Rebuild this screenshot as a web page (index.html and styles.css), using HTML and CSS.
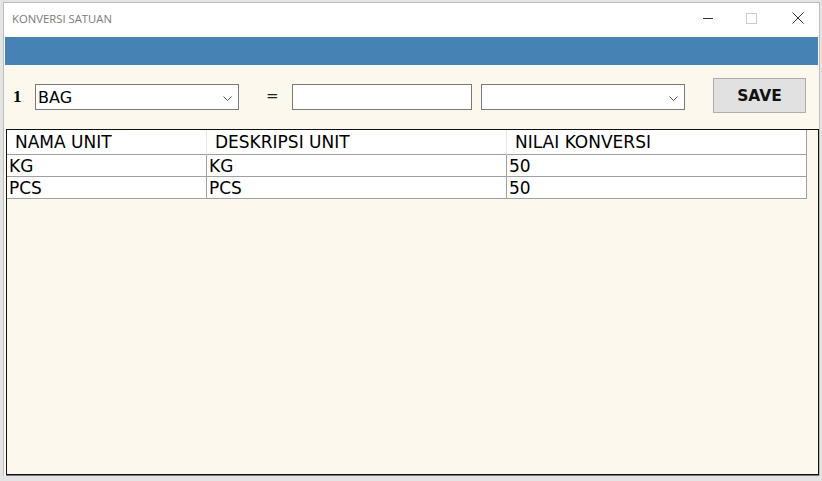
FILE: index.html
```html
<!DOCTYPE html>
<html>
<head>
<meta charset="utf-8">
<link rel="stylesheet" href="styles.css">
</head>
<body>
<div class="window">
  <div class="titlebar">
    <span class="title">KONVERSI SATUAN</span>
    <div class="controls">
      <svg class="ctl" width="46" height="34" viewBox="0 0 46 34"><line x1="22" y1="15.5" x2="32" y2="15.5" stroke="#333" stroke-width="1"/></svg>
      <svg class="ctl" width="46" height="34" viewBox="0 0 46 34"><rect x="19.5" y="10.5" width="10" height="10" fill="none" stroke="#cccccc" stroke-width="1"/></svg>
      <svg class="ctl" width="46" height="34" viewBox="0 0 46 34"><path d="M19.5 9.5 L30.5 20.5 M30.5 9.5 L19.5 20.5" stroke="#333" stroke-width="1" fill="none"/></svg>
    </div>
  </div>
  <div class="bluebar"></div>
  <div class="client">
    <div class="toolbar">
      <span class="num">1</span>
      <div class="combo combo-a"><span class="combo-text">BAG</span><svg class="chev" width="9" height="5" viewBox="0 0 9 5"><path d="M0.5 0.5 L4.5 4.5 L8.5 0.5" stroke="#555" fill="none" stroke-width="1"/></svg></div>
      <span class="eq">=</span>
      <div class="textbox"></div>
      <div class="combo combo-b"><span class="combo-text"></span><svg class="chev" width="9" height="5" viewBox="0 0 9 5"><path d="M0.5 0.5 L4.5 4.5 L8.5 0.5" stroke="#555" fill="none" stroke-width="1"/></svg></div>
      <div class="btn">SAVE</div>
    </div>
    <div class="grid">
      <div class="row head">
        <div class="cell c1">NAMA UNIT</div>
        <div class="cell c2">DESKRIPSI UNIT</div>
        <div class="cell c3">NILAI KONVERSI</div>
      </div>
      <div class="row">
        <div class="cell c1">KG</div>
        <div class="cell c2">KG</div>
        <div class="cell c3">50</div>
      </div>
      <div class="row">
        <div class="cell c1">PCS</div>
        <div class="cell c2">PCS</div>
        <div class="cell c3">50</div>
      </div>
    </div>
  </div>
</div>
</body>
</html>
```
FILE: styles.css
```css
html, body {
  margin: 0;
  padding: 0;
}
body {
  width: 822px;
  height: 481px;
  background: #e4e4e4;
  overflow: hidden;
}
.window {
  margin: 2px 0 0 3px;
  width: 815px;
  height: 473px;
  border: 1px solid #bdbdbd;
  border-bottom: none;
  background: #fdf8ee;
  display: flex;
  flex-direction: column;
}
.titlebar {
  height: 34px;
  background: #ffffff;
  display: flex;
  align-items: center;
  justify-content: space-between;
}
.title {
  font-family: "Open Sans", sans-serif;
  font-size: 11.3px;
  color: #7a7a7a;
  padding-left: 8px;
  padding-bottom: 3px;
}
.controls {
  display: flex;
}
.ctl {
  display: block;
}
.bluebar {
  height: 28px;
  background: #4682b4;
  margin: 0 1px 0 1px;
}
.client {
  flex: 1;
  display: flex;
  flex-direction: column;
}
.toolbar {
  height: 64px;
  display: flex;
  align-items: flex-start;
  padding-left: 9px;
}
.num {
  font-family: "Liberation Serif", serif;
  font-weight: bold;
  font-size: 17px;
  margin-top: 22px;
  width: 22px;
}
.combo {
  margin-top: 19px;
  height: 24px;
  border: 1px solid #7a7a7a;
  background: #fff;
  display: flex;
  align-items: center;
  justify-content: space-between;
  box-sizing: content-box;
}
.combo-a { width: 202px; }
.combo-b { width: 202px; margin-left: 9px; }
.combo-text {
  font-family: "DejaVu Sans", sans-serif;
  font-size: 16px;
  color: #000;
  padding-left: 2px;
}
.chev {
  margin-right: 6px;
  margin-top: 2px;
}
.eq {
  font-family: "DejaVu Sans", sans-serif;
  font-size: 15px;
  color: #222;
  margin-top: 22px;
  margin-left: 27px;
  width: 26px;
}
.textbox {
  margin-top: 19px;
  width: 178px;
  height: 24px;
  border: 1px solid #7a7a7a;
  background: #fff;
}
.btn {
  margin-top: 13px;
  margin-left: 28px;
  width: 91px;
  height: 33px;
  border: 1px solid #adadad;
  background: #e1e1e1;
  font-family: "DejaVu Sans", sans-serif;
  font-weight: bold;
  font-size: 15.5px;
  display: flex;
  align-items: center;
  justify-content: center;
  color: #111;
}
.grid {
  flex: 1;
  border: 1px solid #111;
  margin-left: 2px;
  margin-bottom: 1px;
  box-shadow: 0 1px 0 #777;
}
.row {
  display: flex;
}
.cell {
  box-sizing: border-box;
  font-family: "DejaVu Sans", sans-serif;
  font-size: 17px;
  color: #000;
  height: 22px;
  line-height: 22px;
  border-right: 1px solid #a0a0a0;
  border-bottom: 1px solid #a0a0a0;
  background: #fff;
  padding-left: 2px;
  white-space: nowrap;
  overflow: hidden;
}
.c1 { width: 200px; }
.c2 { width: 300px; }
.c3 { width: 300px; }
.head .cell {
  height: 25px;
  line-height: 25px;
  padding-left: 8px;
  border-right-color: #e6e6e6;
}
.head .c3 { border-right-color: #a0a0a0; }
```
